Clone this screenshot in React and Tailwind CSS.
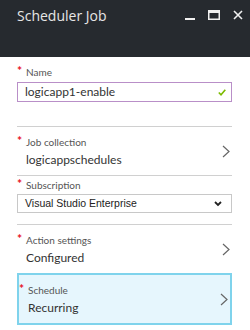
import React from "react";

const font = { fontFamily: 'Lato, "Open Sans", sans-serif' };

function Chevron() {
  return (
    <svg width="8" height="13" viewBox="0 0 8 13" className="shrink-0">
      <polyline points="1,1 7,6.5 1,12" fill="none" stroke="#666" strokeWidth="1.2" />
    </svg>
  );
}

function Label({ children }) {
  return (
    <div className="flex items-start text-[10px] leading-[14px] text-[#555]">
      <span className="w-[9px] text-[#e81123] text-[12px] font-bold leading-[12px]">*</span>
      <span>{children}</span>
    </div>
  );
}

function LinkRow({ label, value }) {
  return (
    <div className="flex items-center justify-between h-[48px] pr-[2px]">
      <div className="flex flex-col">
        <Label>{label}</Label>
        <div className="pl-[9px] mt-[3px] text-[12px] leading-[16px] text-[#333]">{value}</div>
      </div>
      <Chevron />
    </div>
  );
}

export default function App() {
  return (
    <div className="w-[250px] h-[330px] bg-white overflow-hidden" style={font}>
      <div className="h-[57px] bg-[#262a2f] flex items-start justify-between pl-[17px] pr-[7px] pt-[6px]">
        <h1 className="text-[14px] leading-[20px] text-[#e6e6e6]" style={{ fontFamily: '"Open Sans", sans-serif' }}>Scheduler Job</h1>
        <div className="flex items-center gap-[13px] pt-[4px]">
          <svg width="10" height="10" viewBox="0 0 10 10">
            <rect x="0" y="8" width="10" height="2" fill="#f0f0f0" />
          </svg>
          <svg width="12" height="10" viewBox="0 0 12 10">
            <rect x="0.75" y="0.75" width="10.5" height="8.5" fill="none" stroke="#f0f0f0" strokeWidth="1.5" />
            <rect x="0" y="0" width="12" height="3" fill="#f0f0f0" />
          </svg>
          <svg width="10" height="10" viewBox="0 0 10 10">
            <path d="M1 1 L9 9 M9 1 L1 9" stroke="#f0f0f0" strokeWidth="1.6" />
          </svg>
        </div>
      </div>

      <div className="pl-[17px] pr-[18px] pt-[8px]">
        <Label>Name</Label>
        <div className="mt-[3px] h-[20px] border border-[#b98fc8] flex items-center justify-between pl-[7px] pr-[5px] text-[12px] text-[#333]">
          <span>logicapp1-enable</span>
          <svg width="8" height="7" viewBox="0 0 8 7">
            <polyline points="0.8,3.5 3,5.8 7.3,0.8" fill="none" stroke="#7cbb00" strokeWidth="1.6" />
          </svg>
        </div>

        <div className="mt-[24px] border-t border-[#d0d0d0]" />
        <LinkRow label="Job collection" value="logicappschedules" />
        <div className="border-t border-[#d0d0d0]" />

        <div className="pt-[2px]">
          <Label>Subscription</Label>
          <div className="mt-[2px] h-[19px] border border-[#c8c8c8] flex items-center justify-between pl-[7px] pr-[9px] text-[10.5px] text-[#222]" style={{ fontFamily: '"Liberation Sans", Arial, sans-serif' }}>
            <span>Visual Studio Enterprise</span>
            <svg width="8" height="6" viewBox="0 0 8 6">
              <polyline points="1,1 4,4 7,1" fill="none" stroke="#222" strokeWidth="1.8" />
            </svg>
          </div>
        </div>

        <div className="mt-[11px] border-t border-[#d0d0d0]" />
        <LinkRow label="Action settings" value="Configured" />

        <div className="border-2 border-[#7fd3ec] bg-[#e6f6fd]">
          <LinkRow label="Schedule" value="Recurring" />
        </div>
      </div>
    </div>
  );
}
